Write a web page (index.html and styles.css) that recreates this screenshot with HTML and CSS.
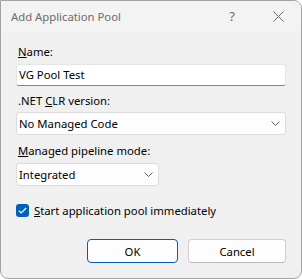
FILE: index.html
```html
<!DOCTYPE html>
<html>
<head>
<meta charset="utf-8">
<link rel="stylesheet" href="styles.css">
</head>
<body>
<div class="window">
  <div class="titlebar">
    <span class="title">Add Application Pool</span>
    <div class="controls">
      <span class="ctl help">?</span>
      <span class="ctl close">
        <svg width="11" height="11" viewBox="0 0 11 11"><path d="M0.5 0.5 L10.5 10.5 M10.5 0.5 L0.5 10.5" stroke="#6b6b6b" stroke-width="1" fill="none"/></svg>
      </span>
    </div>
  </div>
  <div class="body">
    <div class="label l1"><u>N</u>ame:</div>
    <div class="textbox">VG Pool Test</div>
    <div class="label l2">.NET <u>C</u>LR version:</div>
    <div class="combo wide"><span>No Managed Code</span><svg class="chev" width="9" height="5" viewBox="0 0 9 5"><path d="M0.5 0.5 L4.5 4.5 L8.5 0.5" stroke="#5f5f5f" stroke-width="1" fill="none"/></svg></div>
    <div class="label l3"><u>M</u>anaged pipeline mode:</div>
    <div class="combo narrow"><span>Integrated</span><svg class="chev" width="9" height="5" viewBox="0 0 9 5"><path d="M0.5 0.5 L4.5 4.5 L8.5 0.5" stroke="#5f5f5f" stroke-width="1" fill="none"/></svg></div>
    <div class="check">
      <span class="box"><svg width="9" height="7" viewBox="0 0 9 7"><path d="M0.8 3.6 L3.2 6 L8.2 1" stroke="#ffffff" stroke-width="1.2" fill="none"/></svg></span>
      <span><u>S</u>tart application pool immediately</span>
    </div>
    <div class="buttons">
      <div class="btn default">OK</div>
      <div class="btn">Cancel</div>
    </div>
  </div>
</div>
</body>
</html>
```
FILE: styles.css
```css
html, body { margin: 0; padding: 0; background: #ffffff; }
.window {
  width: 302px; height: 279px; box-sizing: border-box;
  border: 1px solid #a3a3a3; border-radius: 0 8px 8px 8px;
  background: #f0f0f0; overflow: hidden;
  font-family: "Noto Sans", sans-serif; font-size: 11.3px; color: #000;
  display: flex; flex-direction: column;
}
.titlebar {
  height: 30px; flex: none; background: #f3f3f3;
  display: flex; align-items: center; padding-left: 10px;
  color: #6b6b6b;
}
.title { flex: 1; }
.controls { display: flex; height: 30px; }
.ctl { width: 46px; display: flex; align-items: center; justify-content: center; font-size: 13px; color: #6b6b6b; }
.body { padding: 13px 15px 0 15px; display: flex; flex-direction: column; }
.label { padding-left: 2px; line-height: 16px; height: 16px; }
.l1 { margin-bottom: 4px; }
.l2 { margin-top: 7px; margin-bottom: 3px; }
.l3 { margin-top: 8px; margin-bottom: 4px; }
.textbox {
  width: 270px; height: 22px; box-sizing: border-box; background: #fff;
  border: 1px solid #e5e5e5; border-bottom-color: #868686; border-radius: 3px;
  padding-left: 2px; line-height: 20px;
}
.combo {
  height: 23px; box-sizing: border-box; background: #fdfdfd;
  border: 1px solid #dcdcdc; border-radius: 3px;
  display: flex; align-items: center; justify-content: space-between;
  padding: 0 5px 0 2px;
}
.wide { width: 270px; }
.narrow { width: 143px; }
.check { display: flex; align-items: center; margin-top: 16px; gap: 5px; height: 16px; }
.box {
  width: 13px; height: 13px; border-radius: 3px; background: #005fb8;
  display: flex; align-items: center; justify-content: center;
}
.buttons { display: flex; justify-content: flex-end; gap: 10px; margin-top: 21px; }
.btn {
  width: 98px; height: 24px; box-sizing: border-box; background: #fdfdfd;
  border: 1px solid #d0d0d0; border-bottom-color: #b8b8b8; border-radius: 4px;
  display: flex; align-items: center; justify-content: center;
}
.btn.default { width: 91px; border: 1px solid #005fb8; }
```
